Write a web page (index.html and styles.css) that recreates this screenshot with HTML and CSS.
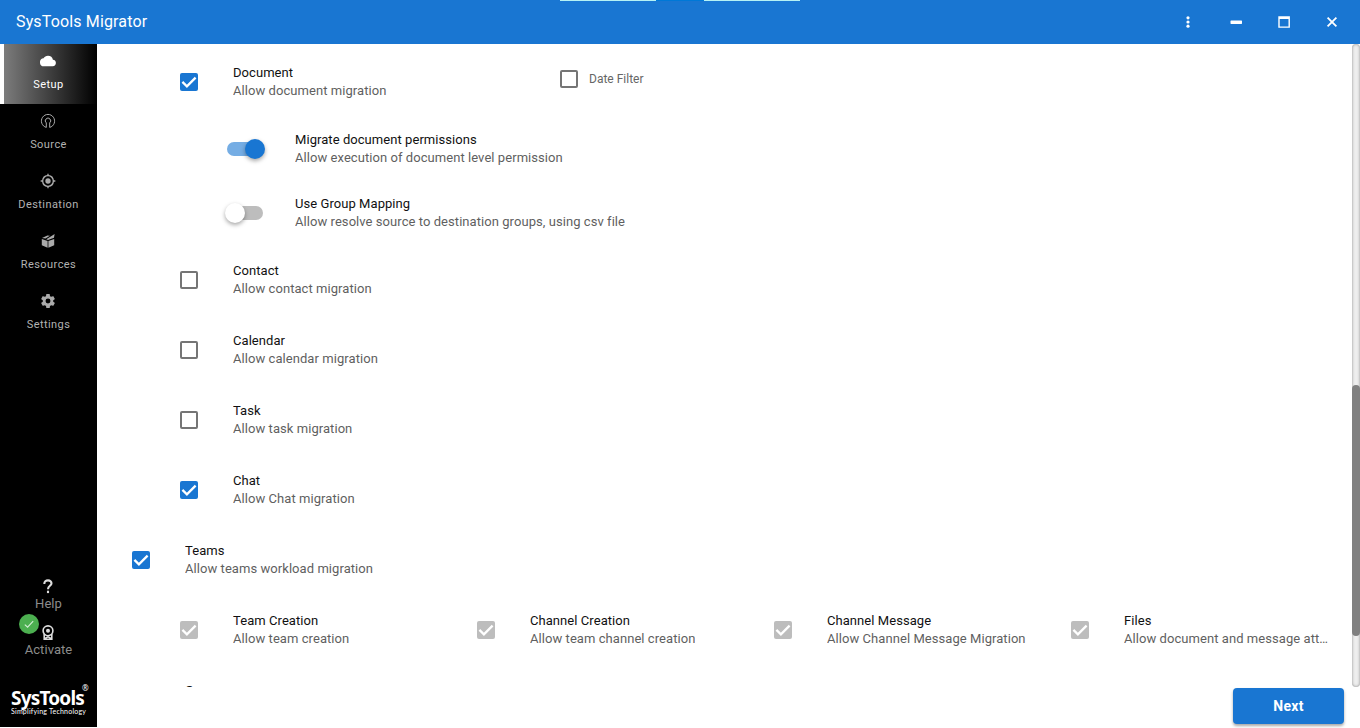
FILE: index.html
```html
<!DOCTYPE html>
<html lang="en">
<head>
  <meta charset="UTF-8" />
  <meta name="viewport" content="width=device-width, initial-scale=1" />
  <title>SysTools Migrator</title>
  <link rel="stylesheet" href="styles.css">
</head>
<body>

  <svg class="sprite">
    <symbol id="tick" viewBox="0 0 18 18"><path d="M2.4 8.9l4.5 4.4 8.7-8.7" fill="none" stroke="#fff" stroke-width="2.3"/></symbol>
  </svg>

  <!-- Title bar -->
  <header class="topbar">
    <div class="edge"><i></i><b></b><i></i></div>
    <div class="app-name">SysTools Migrator</div>
    <div class="window-buttons">
      <svg viewBox="0 0 16 16" fill="#fff"><circle cx="8" cy="3.8" r="1.6"/><circle cx="8" cy="8" r="1.6"/><circle cx="8" cy="12.2" r="1.6"/></svg>
      <svg viewBox="0 0 16 16" fill="#fff"><rect x="2.5" y="6.5" width="11.5" height="3.4" rx=".6"/></svg>
      <svg viewBox="0 0 16 16" fill="#fff"><path fill-rule="evenodd" d="M2.3 2.3h11.6v11.5H2.3zM3.7 5v7.4h8.8V5z"/></svg>
      <svg viewBox="0 0 16 16" fill="none" stroke="#fff" stroke-width="1.8"><path d="M3.6 3.6l8.8 8.8M12.4 3.6l-8.8 8.8"/></svg>
    </div>
  </header>

  <div class="main">
    <!-- Sidebar -->
    <nav class="sidebar">
      <a class="nav-item active">
        <svg viewBox="0 0 24 24" fill="#fff"><path d="M19.35 10.03A7.49 7.49 0 0 0 12 4C9.11 4 6.6 5.64 5.35 8.03A6 6 0 0 0 6 20h13a5 5 0 0 0 .35-9.97z"/></svg>
        <span>Setup</span>
      </a>
      <a class="nav-item">
        <svg viewBox="0 0 16 16" fill="none" stroke="#aaa" stroke-width="1"><path d="M6.3 14.4A6.6 6.6 0 1 1 9.7 14.4V9.9a2.7 2.7 0 1 0-3.4 0z"/></svg>
        <span>Source</span>
      </a>
      <a class="nav-item">
        <svg viewBox="0 0 24 24" fill="#aaa"><path fill-rule="evenodd" d="M12 8a4 4 0 1 0 0 8 4 4 0 0 0 0-8zm8.94 3A8.99 8.99 0 0 0 13 3.06V1h-2v2.06A8.99 8.99 0 0 0 3.06 11H1v2h2.06A8.99 8.99 0 0 0 11 20.94V23h2v-2.06A8.99 8.99 0 0 0 20.94 13H23v-2zM12 19a7 7 0 1 1 0-14 7 7 0 0 1 0 14z"/></svg>
        <span>Destination</span>
      </a>
      <a class="nav-item">
        <svg viewBox="0 0 16 16" fill="#aaa"><path d="M1.8 5.9l5.8 2v6.9l-5.8-2.5zM8.4 7.9l5.8-2v6.4l-5.8 2.5zM2 4.9L7.4 2.6l2.6.2-4.5 2.7zM6.3 6.2l4.8-3L14.6 1l-.6 3.7-6 2.2z"/></svg>
        <span>Resources</span>
      </a>
      <a class="nav-item">
        <svg viewBox="1 1 22 22" fill="#aaa"><path d="M19.14 12.94c.04-.3.06-.61.06-.94s-.02-.64-.07-.94l2.03-1.58a.49.49 0 0 0 .12-.61l-1.92-3.32a.49.49 0 0 0-.59-.22l-2.39.96a7 7 0 0 0-1.62-.94l-.36-2.54a.48.48 0 0 0-.48-.41h-3.84a.47.47 0 0 0-.47.41l-.36 2.54c-.59.24-1.13.57-1.62.94l-2.39-.96a.48.48 0 0 0-.59.22L2.74 8.87a.47.47 0 0 0 .12.61l2.03 1.58a7.3 7.3 0 0 0 0 1.88l-2.03 1.58a.49.49 0 0 0-.12.61l1.92 3.32c.12.22.37.29.59.22l2.39-.96c.5.38 1.03.7 1.62.94l.36 2.54c.05.24.24.41.48.41h3.84c.24 0 .44-.17.47-.41l.36-2.54a7 7 0 0 0 1.62-.94l2.39.96c.22.08.47 0 .59-.22l1.92-3.32a.47.47 0 0 0-.12-.61zM12 15.4a3.4 3.4 0 1 1 0-6.8 3.4 3.4 0 0 1 0 6.8z"/></svg>
        <span>Settings</span>
      </a>

      <div class="bottom">
        <a class="bottom-item">
          <svg viewBox="0 0 16 16" fill="none" stroke="#ddd" stroke-width="2.1"><path d="M4.3 5C4.3 2.6 5.8 1.4 8 1.4s3.5 1.2 3.5 2.9c0 2.5-3.5 2.6-3.5 5.9"/><path d="M8 11.7v2.4"/></svg>
          <span>Help</span>
        </a>
        <a class="bottom-item">
          <svg viewBox="0 0 16 16" fill="none" stroke="#ddd" stroke-width="1.6"><circle cx="8" cy="5.8" r="4.9"/><circle cx="8" cy="5.8" r="2" fill="#ddd" stroke="none"/><path d="M4.2 9v5.3h7.6V9M4.4 13.6L8 11.8l3.6 1.8"/></svg>
          <span>Activate</span>
          <em class="badge"><svg viewBox="0 0 20 20" fill="none" stroke="#d5efd6" stroke-width="1.1"><path d="M5.8 10.6l2.8 2.6 5.6-6"/></svg></em>
        </a>
      </div>

      <div class="brand">
        <div class="brand-name">SysTools<sup>®</sup></div>
        <div class="brand-sub">Simplifying Technology</div>
      </div>
    </nav>

    <!-- Workload options -->
    <section class="content">
      <div class="scroll-area">
        <div class="row sub">
          <span class="check on"><svg><use href="#tick"/></svg></span>
          <div class="text doc"><p>Document</p><p>Allow document migration</p></div>
          <label class="filter"><span class="check"></span>Date Filter</label>
        </div>
        <div class="row option">
          <span class="switch on"></span>
          <div class="text"><p>Migrate document permissions</p><p>Allow execution of document level permission</p></div>
        </div>
        <div class="row option">
          <span class="switch"></span>
          <div class="text"><p>Use Group Mapping</p><p>Allow resolve source to destination groups, using csv file</p></div>
        </div>
        <div class="row sub">
          <span class="check"></span>
          <div class="text"><p>Contact</p><p>Allow contact migration</p></div>
        </div>
        <div class="row sub">
          <span class="check"></span>
          <div class="text"><p>Calendar</p><p>Allow calendar migration</p></div>
        </div>
        <div class="row sub">
          <span class="check"></span>
          <div class="text"><p>Task</p><p>Allow task migration</p></div>
        </div>
        <div class="row sub">
          <span class="check on"><svg><use href="#tick"/></svg></span>
          <div class="text"><p>Chat</p><p>Allow Chat migration</p></div>
        </div>
        <div class="row">
          <span class="check on"><svg><use href="#tick"/></svg></span>
          <div class="text"><p>Teams</p><p>Allow teams workload migration</p></div>
        </div>
        <div class="team-grid">
          <div class="row">
            <span class="check on disabled"><svg><use href="#tick"/></svg></span>
            <div class="text"><p>Team Creation</p><p>Allow team creation</p></div>
          </div>
          <div class="row">
            <span class="check on disabled"><svg><use href="#tick"/></svg></span>
            <div class="text"><p>Channel Creation</p><p>Allow team channel creation</p></div>
          </div>
          <div class="row">
            <span class="check on disabled"><svg><use href="#tick"/></svg></span>
            <div class="text"><p>Channel Message</p><p>Allow Channel Message Migration</p></div>
          </div>
          <div class="row">
            <span class="check on disabled"><svg><use href="#tick"/></svg></span>
            <div class="text"><p>Files</p><p>Allow document and message attachments</p></div>
          </div>
        </div>
        <div class="row">
          <span class="check"></span>
          <div class="text"><p>Groups</p><p>Allow groups migration</p></div>
        </div>
      </div>
      <div class="scrollbar"><div class="thumb"></div></div>
      <footer class="actions"><button class="next">Next</button></footer>
    </section>
  </div>

</body>
</html>
```

FILE: styles.css
```css
* {
  box-sizing: border-box;
}

body {
  margin: 0;
  height: 728px;
  overflow: hidden;
  display: flex;
  flex-direction: column;
  background: #fff;
  font-family: Roboto, sans-serif;
  font-size: 13px;
}

p {
  margin: 0;
}

.sprite {
  display: none;
}

.topbar {
  position: relative;
  flex: 0 0 44px;
  display: flex;
  align-items: center;
  justify-content: space-between;
  padding: 0 20px 0 16px;
  background: #1976d2;
  color: #fff;
}

.app-name {
  font-size: 16px;
  letter-spacing: 0.15px;
  padding-bottom: 2px;
}

.window-buttons {
  display: flex;
  gap: 32px;
}

.window-buttons svg {
  width: 16px;
  height: 16px;
}

/* thin light strips on the window's top edge */
.edge {
  position: absolute;
  top: 0;
  left: 560px;
  display: flex;
  height: 1px;
}

.edge i {
  width: 96px;
  background: #b5f2f5;
}

.edge b {
  width: 48px;
  background: #0078d7;
}

.main {
  flex: 1;
  display: flex;
  min-height: 0;
}

/* Sidebar */
.sidebar {
  width: 97px;
  display: flex;
  flex-direction: column;
  background: #000;
  height: 683px;
}

.nav-item {
  height: 60px;
  display: flex;
  flex-direction: column;
  align-items: center;
  padding-top: 9px;
  color: #b2b2b2;
  font-size: 11px;
  letter-spacing: 0.44px;
  line-height: 15px;
}

.nav-item svg {
  width: 16px;
  height: 16px;
  margin: 0 1px 8px 0;
}

.nav-item.active {
  color: #fff;
  padding-right: 4px;
  border-left: 4px solid #fff;
  background: linear-gradient(to right, #7c7c7c, #000);
}

.bottom {
  margin-top: auto;
  color: #8c8c8c;
}

.bottom-item {
  position: relative;
  display: flex;
  flex-direction: column;
  align-items: center;
  height: 46px;
  font-size: 13px;
  letter-spacing: 0.05px;
  line-height: 18px;
}

.bottom-item > svg {
  width: 16px;
  height: 16px;
  margin-right: 1px;
}

.badge {
  position: absolute;
  left: 19px;
  top: -11px;
  width: 20px;
  height: 20px;
  border-radius: 50%;
  background: #4caf50;
}

.badge svg {
  display: block;
}

.brand {
  height: 56px;
  padding: 15px 0 0 11px;
  color: #fff;
  font-family: Lato, sans-serif;
  white-space: nowrap;
}

.brand-name {
  display: flex;
  font-family: "Noto Sans", sans-serif;
  font-size: 19px;
  font-weight: 700;
  line-height: 24px;
  letter-spacing: -0.8px;
}

.brand-name sup {
  font-size: 8px;
  font-weight: 400;
  line-height: 8px;
  margin: -2px 0 0 -2px;
}

.brand-sub {
  font-size: 7px;
  line-height: 8px;
  letter-spacing: 0.22px;
  margin-top: -3px;
}

/* Content */
.content {
  flex: 1;
  min-width: 0;
  display: grid;
  grid-template-columns: 1fr 8px;
  grid-template-rows: 643px 41px;
}

.scroll-area {
  overflow: hidden;
  padding: 3px 8px 0 35px;
}

.row {
  display: flex;
  align-items: center;
  height: 70px;
}

.row:last-child {
  height: 69px;
}

.row.sub {
  padding-left: 48px;
}

.row.option {
  height: 64px;
  padding-left: 95px;
}

.text {
  margin-left: 35px;
  min-width: 0;
  line-height: 18px;
  letter-spacing: 0.06px;
  color: #5f5f5f;
}

.text p {
  overflow: hidden;
  text-overflow: ellipsis;
  white-space: nowrap;
}

.text p:first-child {
  color: #111;
}

.text.doc {
  width: 327px;
}

.check {
  flex: none;
  width: 18px;
  height: 18px;
  border: 2px solid #757575;
  border-radius: 2px;
}

.check.on {
  border: none;
  background: #1976d2;
}

.check.on.disabled {
  background: #bdbdbd;
}

.check svg {
  display: block;
  width: 18px;
  height: 18px;
}

.filter {
  display: flex;
  align-items: center;
  gap: 11px;
  margin-top: -6px;
  color: #666;
  font-size: 12px;
}

.switch {
  position: relative;
  flex: none;
  width: 36px;
  height: 14px;
  border-radius: 7px;
  background: #bdbdbd;
}

.switch::after {
  content: "";
  position: absolute;
  top: -3px;
  left: -2px;
  width: 20px;
  height: 20px;
  border-radius: 50%;
  background: #fff;
  box-shadow: 0 2px 4px rgba(0, 0, 0, 0.35);
}

.switch.on {
  background: #75ade4;
}

.switch.on::after {
  left: 18px;
  background: #1976d2;
}

.option .text {
  margin-left: 32px;
}

.team-grid {
  display: grid;
  grid-template-columns: repeat(4, 1fr);
  margin-left: 24px;
}

.team-grid .row {
  min-width: 0;
  height: 70px;
  padding: 0 16px 0 24px;
}

.scrollbar {
  background: #eee;
  border-radius: 4px;
  box-shadow: inset 0 0 3px #888;
}

.thumb {
  height: 251px;
  margin-top: 341px;
  border-radius: 4px;
  background: #808080;
}

.actions {
  grid-column: 1 / 3;
  display: flex;
  justify-content: flex-end;
  padding: 1px 16px 0 0;
}

.next {
  width: 111px;
  height: 36px;
  border: none;
  border-radius: 4px;
  background: #1976d2;
  color: #fff;
  font-family: Roboto, sans-serif;
  font-size: 14px;
  font-weight: 700;
  letter-spacing: 0.3px;
  box-shadow: 0 2px 3px rgba(0, 0, 0, 0.35);
}
```
